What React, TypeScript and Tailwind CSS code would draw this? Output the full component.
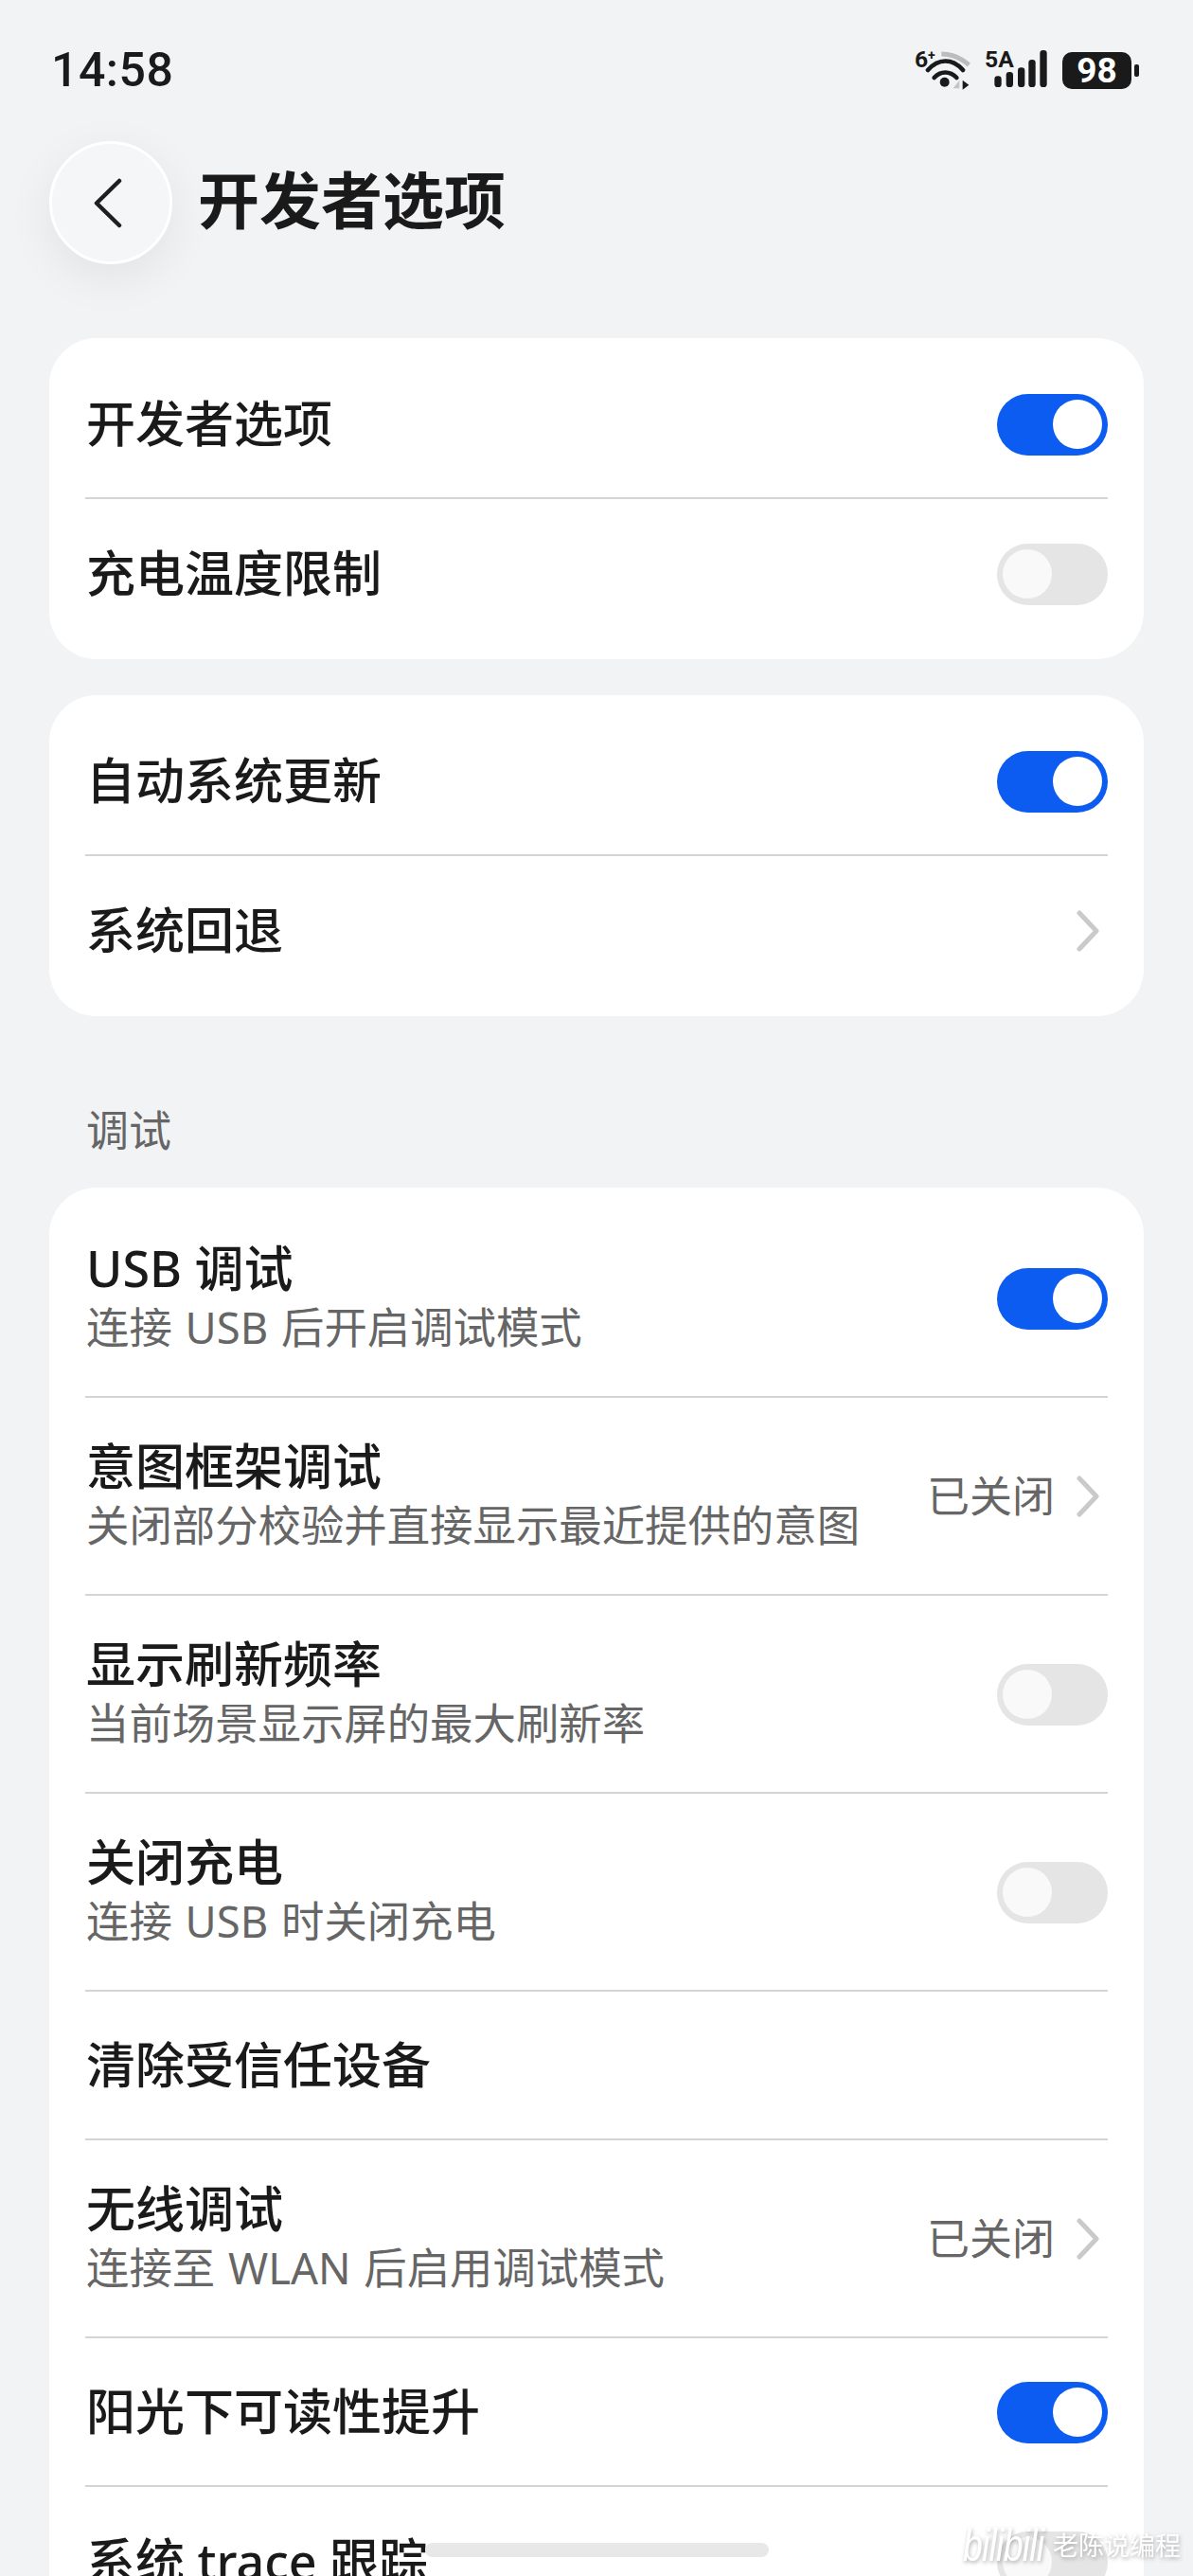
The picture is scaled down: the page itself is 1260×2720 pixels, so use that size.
const SANS = "font-['Noto_Sans','Noto_Sans_CJK_SC',sans-serif]";

function Toggle({ on }: { on: boolean }) {
  return (
    <div className={`mt-[1px] flex h-[65px] w-[117px] shrink-0 items-center rounded-full px-[6px] ${on ? "justify-end bg-[#0d5cf2]" : "justify-start bg-[#e5e5e5]"}`}>
      <div className={`h-[52px] w-[52px] rounded-full ${on ? "bg-white" : "bg-[#f9f9f9]"}`} />
    </div>
  );
}

function Chevron() {
  return (
    <svg width="26" height="44" viewBox="0 0 26 44" className="shrink-0" fill="none">
      <path d="M4 3 L22 22 L4 41" stroke="#cacaca" strokeWidth="5" strokeLinecap="round" strokeLinejoin="round" />
    </svg>
  );
}

type RowP = { title: string; sub?: string; on?: boolean; off?: boolean; chevron?: boolean; value?: string; last?: boolean };

function Row({ title, sub, on, off, chevron, value, last }: RowP) {
  return (
    <div className={`flex items-center justify-between ${sub ? "h-[209px]" : "h-[157px]"} ${last ? "" : "border-b-2 border-[#d4d4d4]"}`}>
      <div className="flex min-w-0 flex-col pb-[2px] pl-[1px]">
        <div className="text-[52px] font-medium leading-[62px] text-[#1a1a1a]">{title}</div>
        {sub && <div className="text-[45.4px] leading-[62px] text-[#666666] [word-spacing:2px]">{sub}</div>}
      </div>
      {on && <Toggle on />}
      {off && <Toggle on={false} />}
      {chevron && (
        <div className="flex items-center gap-[22px] pr-[8px]">
          {value && <span className="text-[45px] leading-[60px] text-[#666666]">{value}</span>}
          <Chevron />
        </div>
      )}
    </div>
  );
}

function Card({ children, className = "" }: { children: React.ReactNode; className?: string }) {
  return <div className={`rounded-[50px] bg-white px-[38px] pb-[12px] pt-[13px] ${className}`}>{children}</div>;
}

function StatusIcons() {
  return (
    <div className="flex items-center">
      <svg width="64" height="44" viewBox="0 0 192 132" fill="none" className="mr-[10px] overflow-visible">
        <text x="0" y="58" fontSize="74" fontWeight="700" fill="#1a1a1a" fontFamily="Roboto, sans-serif">6</text>
        <text x="42" y="34" fontSize="42" fontWeight="700" fill="#1a1a1a" fontFamily="Roboto, sans-serif">+</text>
        <path d="M85 15 C120 15 150 30 172 50" stroke="#bcbcbc" strokeWidth="15" />
        <path d="M42 66 C75 28 120 28 153 66" stroke="#1a1a1a" strokeWidth="14" strokeLinecap="round" />
        <path d="M62 90 C82 68 112 68 133 90" stroke="#1a1a1a" strokeWidth="14" strokeLinecap="round" />
        <circle cx="95" cy="104" r="15" fill="#1a1a1a" />
        <path d="M122 124 L142 124 L142 98 Z" fill="#c4c4c4" />
        <path d="M152 98 L152 128 L172 113 Z" fill="#1a1a1a" />
      </svg>
      <svg width="66" height="44" viewBox="0 0 198 132" fill="none" className="mr-[16px] overflow-visible">
        <text x="0" y="58" fontSize="74" fontWeight="700" fill="#1a1a1a" fontFamily="Roboto, sans-serif">5A</text>
        <rect x="31" y="85" width="22" height="35" rx="10" fill="#1a1a1a" />
        <rect x="68" y="72" width="22" height="48" rx="10" fill="#1a1a1a" />
        <rect x="105" y="58" width="22" height="62" rx="10" fill="#1a1a1a" />
        <rect x="139" y="33" width="22" height="87" rx="10" fill="#1a1a1a" />
        <rect x="175" y="3" width="22" height="117" rx="10" fill="#1a1a1a" />
      </svg>
      <div className="flex items-center gap-[3px]">
        <div className="flex h-[39px] w-[73px] items-center justify-center rounded-[10px] bg-[#1a1a1a] font-['Roboto',sans-serif] text-[37px] font-bold leading-none text-white">98</div>
        <div className="h-[13px] w-[5px] rounded-[2px] bg-[#1a1a1a]" />
      </div>
    </div>
  );
}

function Watermark() {
  return (
    <div className="absolute left-[1017px] top-[2670px] flex items-center gap-[14px] text-white [filter:drop-shadow(1px_2px_2px_rgba(0,0,0,0.3))]">
      <span className="w-[81px] origin-left [transform:scaleX(0.78)] font-['Liberation_Sans',sans-serif] text-[48px] italic leading-[36px] tracking-[-1px]">bilibili</span>
      <span className="text-[27px] leading-[30px]">老陈说编程</span>
    </div>
  );
}

export default function App() {
  return (
    <div className={`relative h-[2720px] w-[1260px] overflow-hidden bg-[#f2f3f5] ${SANS}`}>
      <div className="flex h-[146px] items-center justify-between pl-[54px] pr-[57px] pt-[2px]">
        <span className="font-['Roboto',sans-serif] text-[50px] font-medium leading-none tracking-[0.5px] text-[#1a1a1a]">14:58</span>
        <StatusIcons />
      </div>
      <div className="mt-[3px] flex items-center gap-[27px] pl-[52px]">
        <div className="flex h-[130px] w-[130px] items-center justify-center rounded-full border-[3px] border-white bg-[#f5f6f8] shadow-[0_14px_50px_rgba(0,0,0,0.07)]">
          <svg width="30" height="53" viewBox="0 0 30 53" fill="none" className="mr-[7px]">
            <path d="M27 3 L3 26.5 L27 50" stroke="#1f1f1f" strokeWidth="4.5" strokeLinecap="round" strokeLinejoin="round" />
          </svg>
        </div>
        <div className="pb-[7px] text-[65px] font-bold leading-[80px] text-[#1a1a1a]">开发者选项</div>
      </div>
      <div className="mx-[52px] mt-[78px] flex flex-col">
        <Card>
          <Row title="开发者选项" on />
          <Row title="充电温度限制" off last />
        </Card>
        <Card className="mt-[38px]">
          <Row title="自动系统更新" on />
          <Row title="系统回退" chevron last />
        </Card>
        <div className="px-[39px] pb-[30px] pt-[91px] text-[45px] leading-[60px] text-[#666666]">调试</div>
        <Card>
          <Row title="USB 调试" sub="连接 USB 后开启调试模式" on />
          <Row title="意图框架调试" sub="关闭部分校验并直接显示最近提供的意图" chevron value="已关闭" />
          <Row title="显示刷新频率" sub="当前场景显示屏的最大刷新率" off />
          <Row title="关闭充电" sub="连接 USB 时关闭充电" off />
          <Row title="清除受信任设备" />
          <Row title="无线调试" sub="连接至 WLAN 后启用调试模式" chevron value="已关闭" />
          <Row title="阳光下可读性提升" on />
          <Row title="系统 trace 跟踪" off last />
        </Card>
      </div>
      <div className="absolute left-[449px] top-[2685px] h-[15px] w-[363px] rounded-full bg-[#e8e8e8]" />
      <Watermark />
    </div>
  );
}
